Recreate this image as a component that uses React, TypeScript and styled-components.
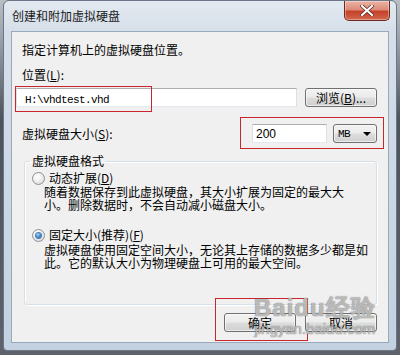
import styled, { createGlobalStyle } from "styled-components";

const GlobalStyle = createGlobalStyle`
  html, body {
    margin: 0;
    padding: 0;
    background: #5e636b;
  }
  body {
    font-family: "Noto Sans CJK SC", "DejaVu Sans", sans-serif;
    font-size: 12px;
    color: #000;
  }
`;

const Screen = styled.div`
  width: 400px;
  height: 355px;
  overflow: hidden;
  position: relative;
  background: linear-gradient(180deg, #b9bec4 0px, #9aa0a7 40px, #4d535a 120px, #5e636b 355px);
`;

const Window = styled.div`
  position: relative;
  margin-left: 3px;
  width: 394px;
  height: 351px;
  box-sizing: border-box;
  border: 1px solid #6b7788;
  border-radius: 6px 6px 4px 4px;
  background: linear-gradient(180deg, #e3e9f0 0px, #d6dfe9 30px, #cbd7e4 200px, #c3d1e0 351px);
  display: flex;
  flex-direction: column;
`;

const TitleBar = styled.div`
  height: 30px;
  display: flex;
  align-items: flex-start;
  padding-left: 8px;
`;

const Title = styled.div`
  margin-top: 8px;
  line-height: 14px;
  color: #1a1a1a;
`;

const CloseButton = styled.div`
  margin-left: auto;
  margin-right: 6px;
  width: 46px;
  height: 20px;
  box-sizing: border-box;
  border: 1px solid #6e2a20;
  border-top: none;
  border-radius: 0 0 5px 5px;
  background: linear-gradient(180deg, #eab3a6 0%, #dc8c78 45%, #c5422a 55%, #d0674c 100%);
  box-shadow: inset 0 0 0 1px rgba(255, 255, 255, 0.35);
  display: flex;
  align-items: center;
  justify-content: center;
`;

const Client = styled.div`
  margin: 0 7px 7px 7px;
  height: 312px;
  box-sizing: border-box;
  border: 1px solid #98a9bd;
  background: #f0f0f0;
  display: flex;
  flex-direction: column;
  padding-top: 11px;
`;

const Text = styled.div<{ $mt?: number; $pl?: number }>`
  line-height: 14px;
  margin-top: ${(p) => p.$mt ?? 0}px;
  padding-left: ${(p) => p.$pl ?? 10}px;
  white-space: nowrap;
`;

const Row = styled.div<{ $mt: number; $pl?: number }>`
  display: flex;
  align-items: center;
  margin-top: ${(p) => p.$mt}px;
  padding-left: ${(p) => p.$pl ?? 0}px;
  padding-right: 11px;
`;

const Field = styled.div<{ $w: number }>`
  position: relative;
  width: ${(p) => p.$w}px;
  height: 19px;
  box-sizing: border-box;
  background: #fff;
  border: 1px solid #dbdfe6;
  border-top-color: #abadb3;
  border-bottom-color: #e3e9ef;
  display: flex;
  align-items: center;
`;

const MonoText = styled.span`
  font-family: "Liberation Mono", "DejaVu Sans Mono", monospace;
  font-size: 11px;
  letter-spacing: -0.6px;
`;

const FieldText = styled.span`
  padding-left: 3px;
  font-family: "Liberation Sans", Arial, sans-serif;
  font-size: 12px;
`;

const Button = styled.div<{ $w: number }>`
  position: relative;
  width: ${(p) => p.$w}px;
  height: 19px;
  box-sizing: border-box;
  border: 1px solid #707070;
  border-radius: 3px;
  background: linear-gradient(180deg, #f2f2f2 0%, #ebebeb 48%, #dddddd 52%, #cfcfcf 100%);
  box-shadow: inset 0 0 0 1px rgba(255, 255, 255, 0.6);
  display: flex;
  align-items: center;
  justify-content: center;
  line-height: 14px;
`;

const Combo = styled(Button)`
  justify-content: space-between;
  padding: 0 5px 0 4px;
`;

const Arrow = styled.span`
  width: 0;
  height: 0;
  border-left: 4px solid transparent;
  border-right: 4px solid transparent;
  border-top: 4px solid #000;
`;

const SizeGroup = styled.div`
  position: relative;
  margin-left: auto;
  display: flex;
  align-items: center;
  gap: 6px;
`;

const Mark = styled.div<{ $l: number; $t: number; $w: number; $h: number }>`
  position: absolute;
  left: ${(p) => p.$l}px;
  top: ${(p) => p.$t}px;
  width: ${(p) => p.$w}px;
  height: ${(p) => p.$h}px;
  box-sizing: border-box;
  border: 1px solid #c8262c;
  pointer-events: none;
`;

const Group = styled.fieldset`
  margin: 11px 11px 0 12px;
  padding: 0;
  height: 151px;
  box-sizing: border-box;
  border: 1px solid #d5dfe5;
  border-radius: 3px;
  box-shadow: inset 1px 1px 0 #fff, 1px 1px 0 #fff;
`;

const Legend = styled.legend`
  margin-left: 5px;
  padding: 0 2px;
  line-height: 14px;
`;

const RadioRow = styled.div<{ $mt: number }>`
  display: flex;
  align-items: center;
  gap: 4px;
  margin-top: ${(p) => p.$mt}px;
  padding-left: 7px;
  line-height: 14px;
`;

const Radio = styled.span<{ $checked?: boolean }>`
  width: 13px;
  height: 13px;
  box-sizing: border-box;
  border-radius: 50%;
  border: 1px solid #8f9192;
  background: radial-gradient(circle at 40% 35%, #ffffff 0%, #f1f1f1 40%, #cfd1d2 100%);
  display: flex;
  align-items: center;
  justify-content: center;
  &::after {
    content: "";
    display: ${(p) => (p.$checked ? "block" : "none")};
    width: 5px;
    height: 5px;
    border-radius: 50%;
    background: radial-gradient(circle at 40% 35%, #a9dcf9 0%, #2a78c8 60%, #184d8a 100%);
    box-shadow: 0 0 0 1px #4f7ca8;
  }
`;

const Desc = styled.div<{ $mt: number }>`
  margin-top: ${(p) => p.$mt}px;
  padding-left: 19px;
  line-height: 12.5px;
  white-space: nowrap;
`;

const Footer = styled.div`
  margin-top: 8px;
  display: flex;
  justify-content: flex-end;
  gap: 9px;
  padding-right: 11px;
`;

const Watermark = styled.div`
  position: absolute;
  left: 250px;
  top: 294px;
  display: flex;
  flex-direction: column;
  align-items: center;
  pointer-events: none;
  color: rgba(255, 255, 255, 0.55);
  text-shadow: 0 0 1px rgba(90, 90, 90, 0.7), 0 0 1px rgba(90, 90, 90, 0.7);
  font-family: "Liberation Sans", Arial, sans-serif;
`;

const WatermarkTop = styled.div`
  font-size: 24px;
  font-weight: bold;
  line-height: 26px;
  letter-spacing: 1px;
`;

const WatermarkBottom = styled.div`
  font-size: 15px;
  line-height: 16px;
`;

const u = (c: string) => <u>{c}</u>;

export default function App() {
  return (
    <Screen>
      <GlobalStyle />
      <Window>
        <TitleBar>
          <Title>创建和附加虚拟硬盘</Title>
          <CloseButton>
            <svg width="14" height="11" viewBox="0 0 14 11">
              <path
                d="M2 1 L12 10 M12 1 L2 10"
                stroke="#5a2018"
                strokeWidth="3.6"
                strokeLinecap="square"
              />
              <path
                d="M2 1 L12 10 M12 1 L2 10"
                stroke="#ffffff"
                strokeWidth="2.2"
                strokeLinecap="square"
              />
            </svg>
          </CloseButton>
        </TitleBar>
        <Client>
          <Text>指定计算机上的虚拟硬盘位置。</Text>
          <Text $mt={11}>位置({u("L")}):</Text>
          <Row $mt={6} $pl={4}>
            <Field $w={281}>
              <span style={{ paddingLeft: 8 }}>
                <MonoText>H:\vhdtest.vhd</MonoText>
              </span>
              <Mark $l={-2} $t={-3} $w={137} $h={26} />
            </Field>
            <Button $w={72} style={{ marginLeft: "auto" }}>
              浏览({u("B")})...
            </Button>
          </Row>
          <Row $mt={17}>
            <Text>虚拟硬盘大小({u("S")}):</Text>
            <SizeGroup>
              <Field $w={75}>
                <FieldText>200</FieldText>
              </Field>
              <Combo $w={44}>
                <MonoText>MB</MonoText>
                <Arrow />
              </Combo>
              <Mark $l={-12} $t={-7} $w={144} $h={32} />
            </SizeGroup>
          </Row>
          <Group>
            <Legend>虚拟硬盘格式</Legend>
            <RadioRow $mt={3}>
              <Radio />
              <span>动态扩展({u("D")})</span>
            </RadioRow>
            <Desc $mt={1}>
              随着数据保存到此虚拟硬盘，其大小扩展为固定的最大大
              <br />
              小。删除数据时，不会自动减小磁盘大小。
            </Desc>
            <RadioRow $mt={17}>
              <Radio $checked />
              <span>固定大小(推荐)({u("F")})</span>
            </RadioRow>
            <Desc $mt={2}>
              虚拟硬盘使用固定空间大小，无论其上存储的数据多少都是如
              <br />
              此。它的默认大小为物理硬盘上可用的最大空间。
            </Desc>
          </Group>
          <Footer>
            <Button $w={72}>
              确定
              <Mark $l={-10} $t={-16} $w={93} $h={43} />
            </Button>
            <Button $w={72}>取消</Button>
          </Footer>
        </Client>
        <Watermark>
          <WatermarkTop>Baidu经验</WatermarkTop>
          <WatermarkBottom>jingyan.baidu.com</WatermarkBottom>
        </Watermark>
      </Window>
    </Screen>
  );
}
